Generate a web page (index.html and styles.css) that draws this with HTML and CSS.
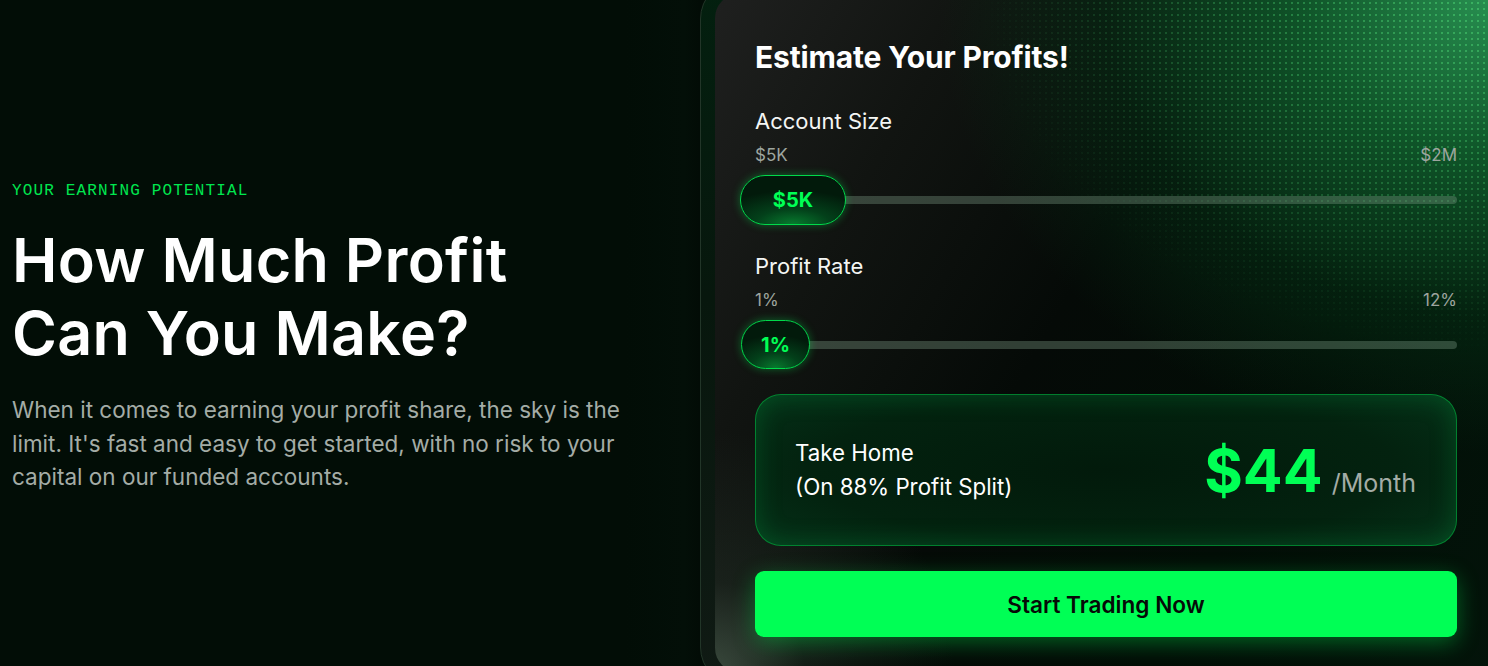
FILE: index.html
```html
<!DOCTYPE html>
<html lang="en">
<head>
<meta charset="utf-8">
<title>Estimate Your Profits</title>
<link rel="stylesheet" href="styles.css">
</head>
<body>
<section class="earn">
  <div class="intro">
    <p class="eyebrow">YOUR EARNING POTENTIAL</p>
    <h1 class="headline">How Much Profit<br>Can You Make?</h1>
    <p class="lead">When it comes to earning your profit share, the sky is the limit. It's fast and easy to get started, with no risk to your capital on our funded accounts.</p>
  </div>
  <div class="frame">
    <div class="calc">
      <h2 class="calc-title">Estimate Your Profits!</h2>

      <div class="field">
        <div class="field-label">Account Size</div>
        <div class="range-labels"><span>$5K</span><span>$2M</span></div>
        <div class="slider">
          <div class="track"></div>
          <div class="thumb thumb-wide">$5K</div>
        </div>
      </div>

      <div class="field">
        <div class="field-label">Profit Rate</div>
        <div class="range-labels"><span>1%</span><span>12%</span></div>
        <div class="slider">
          <div class="track"></div>
          <div class="thumb thumb-narrow">1%</div>
        </div>
      </div>

      <div class="result">
        <div class="result-text">
          <div>Take Home</div>
          <div>(On 88% Profit Split)</div>
        </div>
        <div class="result-value"><span class="amount">$44</span><span class="per">/Month</span></div>
      </div>

      <button class="cta" type="button">Start Trading Now</button>
    </div>
  </div>
</section>
</body>
</html>
```

FILE: styles.css
```css
* { box-sizing: border-box; }

html, body {
  margin: 0;
  padding: 0;
  height: 100%;
  overflow: hidden;
}

body {
  background: #020d06;
  font-family: Inter, "Noto Sans", sans-serif;
  color: #ffffff;
}

.earn {
  display: flex;
  align-items: flex-start;
  margin-top: -21px;
  height: 720px;
  background: linear-gradient(90deg, #020d06 0%, #020d06 42%, #030f08 46%, #020c06 47%);
}

.intro {
  flex: 0 0 700px;
  padding: 0 40px 0 12px;
  margin-top: 201px;
}

.eyebrow {
  margin: 0;
  font-family: "Liberation Mono", "DejaVu Sans Mono", monospace;
  font-size: 16px;
  letter-spacing: 1.15px;
  line-height: 22px;
  color: #00e64f;
}

.headline {
  margin: 22px 0 0;
  font-size: 61px;
  line-height: 73px;
  font-weight: 600;
  letter-spacing: 0.3px;
  color: #ffffff;
}

.lead {
  margin: 23px 0 0;
  font-size: 22.5px;
  line-height: 33.5px;
  color: #a4aca6;
  max-width: 640px;
}

.frame {
  flex: 0 0 812px;
  height: 708px;
  padding: 14px;
  border-radius: 40px;
  border: 1px solid #223528;
  background: linear-gradient(180deg, #03200f 0%, #07170d 45%, #101a14 100%);
}

.calc {
  position: relative;
  height: 678px;
  border-radius: 24px;
  padding: 46px 40px 35px 40px;
  overflow: hidden;
  background:
    radial-gradient(circle at 0% 100%, rgba(95, 120, 100, 0.55) 0, rgba(60, 80, 65, 0.25) 90px, rgba(0, 0, 0, 0) 240px),
    radial-gradient(ellipse 560px 460px at 100% 0%, rgba(45, 160, 90, 0.9) 0, rgba(20, 115, 55, 0.7) 35%, rgba(6, 60, 26, 0.4) 70%, rgba(0, 0, 0, 0) 100%),
    linear-gradient(120deg, #1f201f 0%, #111411 22%, #050a07 45%, #020d06 70%, #03140a 100%);
}

.calc::before {
  content: "";
  position: absolute;
  right: 0;
  top: 0;
  width: 520px;
  height: 380px;
  background-image: radial-gradient(circle, rgba(80, 220, 120, 0.5) 0.9px, rgba(0, 0, 0, 0) 1.4px);
  background-size: 6px 6px;
  -webkit-mask-image: radial-gradient(ellipse 520px 360px at 100% 0%, #000 0%, rgba(0,0,0,0.6) 50%, transparent 100%);
  mask-image: radial-gradient(ellipse 520px 360px at 100% 0%, #000 0%, rgba(0,0,0,0.6) 50%, transparent 100%);
  pointer-events: none;
}

.calc > * { position: relative; }

.calc-title {
  margin: 0;
  font-size: 30px;
  line-height: 34px;
  font-weight: 700;
  letter-spacing: -0.15px;
}

.field { margin-top: 33px; }
.field + .field { margin-top: 27px; }

.field-label {
  font-size: 22px;
  line-height: 28px;
  font-weight: 400;
  color: #f4f6f4;
}

.range-labels {
  margin-top: 10px;
  display: flex;
  justify-content: space-between;
  font-size: 17px;
  line-height: 20px;
  color: #9ea59f;
}

.slider {
  margin-top: 10px;
  height: 50px;
  display: flex;
  align-items: center;
  position: relative;
}

.track {
  flex: 1;
  height: 8px;
  border-radius: 4px;
  background: rgba(120, 150, 130, 0.38);
}

.thumb {
  position: absolute;
  top: 0;
  height: 50px;
  border-radius: 25px;
  border: 1px solid #00d94a;
  background: radial-gradient(ellipse 80% 70% at 50% 100%, #077a2e 0%, #03401a 45%, #021a0b 100%);
  box-shadow: 0 0 8px rgba(0, 255, 85, 0.35);
  display: flex;
  align-items: center;
  justify-content: center;
  font-size: 20px;
  font-weight: 700;
  color: #00ff55;
}

.thumb-wide { left: -15px; width: 106px; }
.thumb-narrow { left: -14px; width: 69px; height: 49px; }

.result {
  margin-top: 24px;
  height: 152px;
  border-radius: 26px;
  border: 1px solid rgba(0, 200, 70, 0.55);
  background: radial-gradient(ellipse 70% 80% at 50% 50%, #021a0b 0%, #03220f 60%, #05341a 100%);
  box-shadow: inset 0 0 26px rgba(0, 180, 70, 0.25);
  display: flex;
  align-items: center;
  justify-content: space-between;
  padding: 0 40px 0 39px;
}

.result-text {
  font-size: 22.3px;
  line-height: 34px;
  color: #ffffff;
}

.result-value {
  display: flex;
  align-items: baseline;
  gap: 9px;
}

.amount {
  font-size: 59px;
  font-weight: 700;
  line-height: 1;
  color: #00ff55;
}

.per {
  font-size: 25px;
  color: #a4aca6;
}

.cta {
  margin-top: 25px;
  width: 100%;
  height: 66px;
  border: 0;
  border-radius: 9px;
  background: #00ff55;
  color: #060a07;
  font-family: Inter, "Noto Sans", sans-serif;
  font-size: 22.6px;
  font-weight: 600;
  box-shadow: 0 6px 22px rgba(0, 255, 85, 0.35);
  cursor: pointer;
}
```
